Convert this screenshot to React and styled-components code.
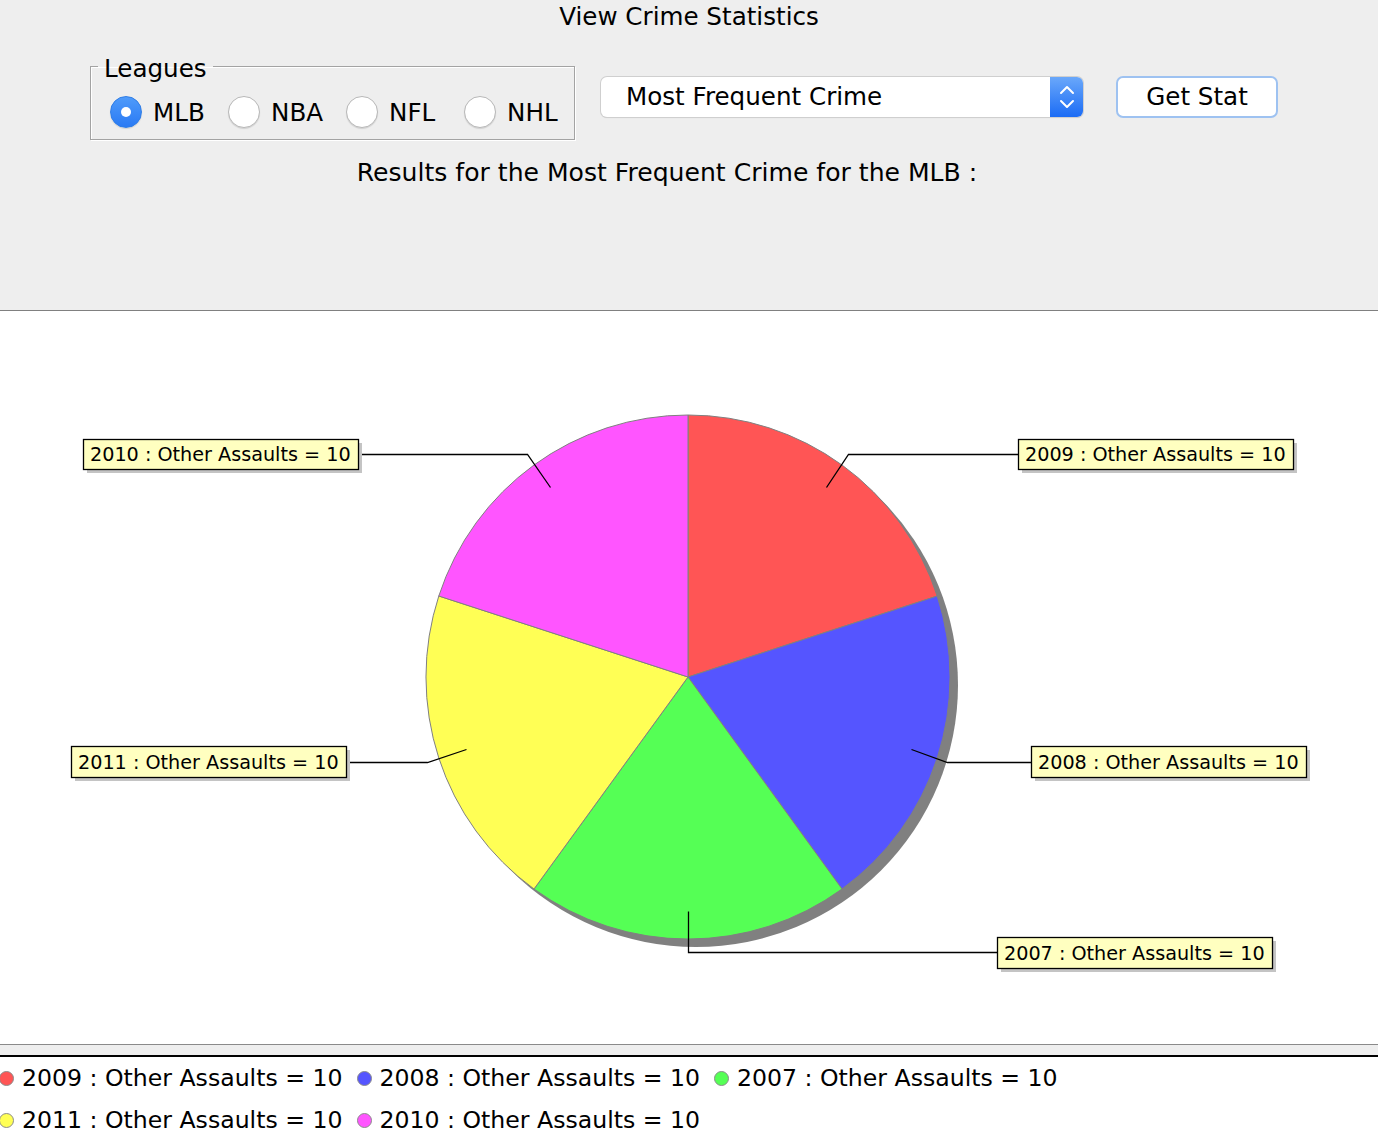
import React, { useState } from "react";
import styled, { createGlobalStyle } from "styled-components";

const GlobalStyle = createGlobalStyle`
  body {
    margin: 0;
    background: #fff;
    font-family: "DejaVu Sans", "Liberation Sans", sans-serif;
    color: #000;
  }
`;

const LEAGUES = ["MLB", "NBA", "NFL", "NHL"];

// pie slices, clockwise from 12 o'clock
const SLICES = [
  { year: "2009", color: "#ff5555" },
  { year: "2008", color: "#5555ff" },
  { year: "2007", color: "#55ff55" },
  { year: "2011", color: "#ffff55" },
  { year: "2010", color: "#ff55ff" },
];

// label boxes and their link lines, in chart coordinates
const LABELS = [
  { year: "2009", x: 1018, y: 128, h: 30, link: "826,176 848,143 1018,143" },
  { year: "2008", x: 1031, y: 435, h: 31, link: "911,438 947,451 1031,451" },
  { year: "2007", x: 997, y: 626, h: 31, link: "688,600 688,641 997,641" },
  { year: "2011", x: 71, y: 435, h: 31, link: "466,438 427,451 346,451" },
  { year: "2010", x: 83, y: 128, h: 30, link: "550,176 527,143 358,143" },
];

const CX = 688;
const CY = 366;
const R = 262;

const point = (deg) => {
  const a = (deg * Math.PI) / 180;
  return [CX + R * Math.sin(a), CY - R * Math.cos(a)];
};

const slicePath = (i, n) => {
  const [x1, y1] = point((360 / n) * i);
  const [x2, y2] = point((360 / n) * (i + 1));
  return `M${CX},${CY} L${x1.toFixed(1)},${y1.toFixed(1)} A${R},${R} 0 0 1 ${x2.toFixed(1)},${y2.toFixed(1)} Z`;
};

const App = () => {
  const [league, setLeague] = useState("MLB");
  const text = (year) => `${year} : Other Assaults = 10`;

  return (
    <Page>
      <GlobalStyle />
      <TopPanel>
        <Title>View Crime Statistics</Title>
        <Controls>
          <Leagues>
            <Legend>Leagues</Legend>
            {LEAGUES.map((l) => (
              <RadioItem key={l} onClick={() => setLeague(l)}>
                <RadioDot $on={league === l} />
                <span>{l}</span>
              </RadioItem>
            ))}
          </Leagues>
          <Combo>
            <ComboText>Most Frequent Crime</ComboText>
            <ComboArrows>
              <svg width="18" height="28" viewBox="0 0 18 28">
                <path d="M3 10 L9 4 L15 10" fill="none" stroke="#fff" strokeWidth="2" strokeLinecap="round" strokeLinejoin="round" />
                <path d="M3 18 L9 24 L15 18" fill="none" stroke="#fff" strokeWidth="2" strokeLinecap="round" strokeLinejoin="round" />
              </svg>
            </ComboArrows>
          </Combo>
          <StatButton>Get Stat</StatButton>
        </Controls>
        <Results>Results for the Most Frequent Crime for the {league} :</Results>
      </TopPanel>

      <ChartArea>
        <svg width="1378" height="733" viewBox="0 0 1378 733">
          <circle cx={CX + 8} cy={CY + 8} r={R} fill="#808080" />
          {SLICES.map((s, i) => (
            <path key={s.year} d={slicePath(i, SLICES.length)} fill={s.color} stroke="#808080" strokeWidth="1" />
          ))}
          {LABELS.map((l) => (
            <g key={l.year}>
              <polyline points={l.link} transform="translate(0.5 0.5)" fill="none" stroke="#000" strokeWidth="1.3" />
              <rect x={l.x + 4} y={l.y + 4} width="275" height={l.h} fill="#c4c4c4" />
              <rect x={l.x + 0.5} y={l.y + 0.5} width="275" height={l.h} fill="#ffffc0" stroke="#000" strokeWidth="1.3" />
              <LabelText x={l.x + 7} y={l.y + l.h / 2 + 7}>
                {text(l.year)}
              </LabelText>
            </g>
          ))}
        </svg>
      </ChartArea>

      <Divider />

      <LegendList>
        {SLICES.map((s) => (
          <LegendItem key={s.year}>
            <Swatch $color={s.color} />
            <span>{text(s.year)}</span>
          </LegendItem>
        ))}
      </LegendList>
    </Page>
  );
};

const Page = styled.div`
  width: 1378px;
  overflow: hidden;
`;

const TopPanel = styled.div`
  height: 311px;
  box-sizing: border-box;
  background: #eeeeee;
  border-bottom: 1px solid #808080;
  display: flex;
  flex-direction: column;
  font-size: 24.6px;
`;

const Title = styled.div`
  text-align: center;
  line-height: 34px;
`;

const Controls = styled.div`
  display: flex;
  align-items: flex-start;
  padding-left: 90px;
  margin-top: 15px;
`;

const Leagues = styled.fieldset`
  margin: 0;
  width: 485px;
  box-sizing: border-box;
  padding: 12px 14px 11px 19px;
  border: 1px solid #a3a3a3;
  box-shadow: 1px 1px 0 #fff, inset 1px 1px 0 #fff;
  display: grid;
  grid-template-columns: repeat(3, 118px) auto;
  align-items: center;
  min-inline-size: 0;
`;

const Legend = styled.legend`
  margin-left: -12px;
  padding: 5px 6px 0;
  line-height: 30px;
`;

const RadioItem = styled.label`
  display: flex;
  align-items: center;
  gap: 11px;
  height: 32px;
  cursor: default;
`;

const RadioDot = styled.span`
  width: 32px;
  height: 32px;
  flex: none;
  box-sizing: border-box;
  border-radius: 50%;
  background: ${(p) => (p.$on ? "linear-gradient(#4f9bfa, #2a7af4)" : "#fff")};
  border: 1px solid ${(p) => (p.$on ? "#2f7de6" : "#b8b8b8")};
  box-shadow: 0 1px 1px rgba(0, 0, 0, 0.12);
  display: flex;
  align-items: center;
  justify-content: center;

  &::after {
    content: "";
    width: 10px;
    height: 10px;
    border-radius: 50%;
    background: #fff;
    display: ${(p) => (p.$on ? "block" : "none")};
  }
`;

const Combo = styled.div`
  margin: 28px 0 0 26px;
  width: 482px;
  height: 40px;
  box-sizing: border-box;
  display: flex;
  background: #fff;
  border-radius: 6px;
  box-shadow: 0 0 0 1px #cfcfcf, 0 1px 1px rgba(0, 0, 0, 0.15);
`;

const ComboText = styled.div`
  flex: 1;
  padding-left: 25px;
  line-height: 40px;
`;

const ComboArrows = styled.div`
  width: 33px;
  border-radius: 0 6px 6px 0;
  background: linear-gradient(#6aa8fa, #1b6cf5);
  display: flex;
  align-items: center;
  justify-content: center;
`;

const StatButton = styled.button`
  margin: 27px 0 0 33px;
  width: 162px;
  height: 42px;
  box-sizing: border-box;
  background: #fff;
  border: 2px solid #9ec2f1;
  border-radius: 7px;
  font: inherit;
  color: #000;
  padding: 0 0 2px;
`;

const Results = styled.div`
  margin-top: 16px;
  text-align: center;
  padding-right: 44px;
  line-height: 34px;
  font-size: 25.1px;
`;

const ChartArea = styled.div`
  height: 733px;
  background: #fff;

  svg {
    display: block;
  }
`;

const LabelText = styled.text`
  font-family: "DejaVu Sans", "Liberation Sans", sans-serif;
  font-size: 19.2px;
  fill: #000;
`;

const Divider = styled.div`
  height: 10px;
  background: #eeeeee;
  border-top: 1px solid #8a8a8a;
  border-bottom: 2px solid #000;
`;

const LegendList = styled.div`
  display: flex;
  flex-wrap: wrap;
  margin-left: -1px;
  font-size: 23.6px;
  background: #fff;
`;

const LegendItem = styled.div`
  display: flex;
  align-items: center;
  gap: 8px;
  height: 42px;
  margin-right: 14px;
`;

const Swatch = styled.span`
  width: 15px;
  height: 15px;
  flex: none;
  box-sizing: border-box;
  border-radius: 50%;
  background: ${(p) => p.$color};
  border: 1px solid #8c8c8c;
`;

export default App;
